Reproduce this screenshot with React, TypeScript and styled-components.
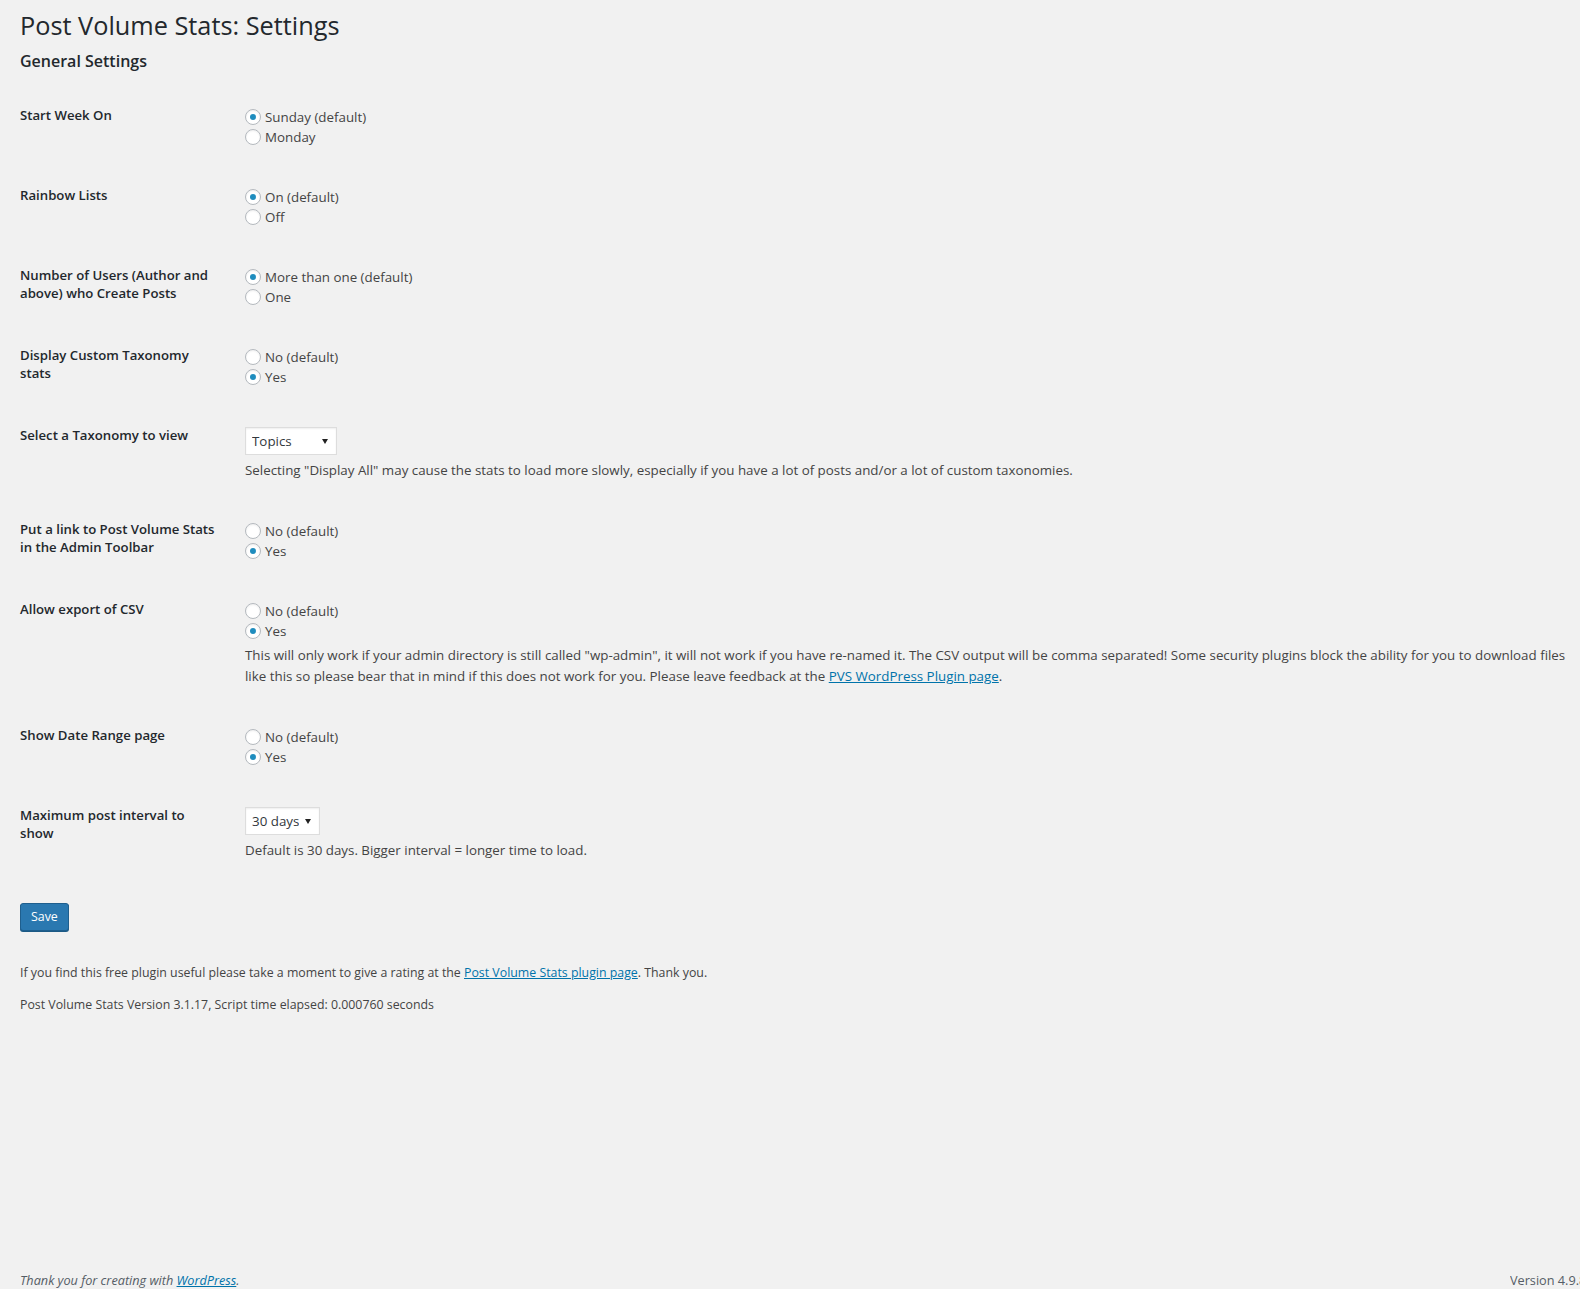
import { useState } from 'react';
import type { ReactNode } from 'react';
import styled, { createGlobalStyle } from 'styled-components';

const GlobalStyle = createGlobalStyle`
  html, body {
    margin: 0;
    padding: 0;
  }
  body {
    background: #f1f1f1;
    color: #444;
    font-family: "Open Sans", "Noto Sans", sans-serif;
    font-size: 13.35px;
    overflow-x: hidden;
  }
`;

const Page = styled.div`
  min-height: 100vh;
  display: flex;
  flex-direction: column;
`;

const Wrap = styled.div`
  padding: 0 0 0 20px;
`;

const Title = styled.h1`
  margin: 0;
  padding: 9px 0 4px;
  font-size: 25.3px;
  font-weight: 400;
  line-height: 32.5px;
  color: #23282d;
`;

const SectionTitle = styled.h2`
  margin: 5px 0 0;
  font-size: 16px;
  font-weight: 600;
  line-height: 21px;
  color: #23282d;
`;

const Table = styled.div`
  margin-top: 14px;
  display: flex;
  flex-direction: column;
`;

const Row = styled.div`
  display: grid;
  grid-template-columns: 200px 1fr;
  column-gap: 25px;
`;

const Th = styled.div`
  padding: 20px 0;
  font-size: 13.2px;
  font-weight: 600;
  line-height: 18.2px;
  color: #23282d;
  white-space: pre-line;
`;

const Td = styled.div`
  padding: 21px 0 19px;
`;

const Option = styled.label`
  display: flex;
  align-items: center;
  height: 20px;
  font-size: 13.35px;
  color: #444;
  cursor: pointer;
`;

const Radio = styled.input.attrs({ type: 'radio' })`
  appearance: none;
  margin: 0 4px 0 0;
  width: 16px;
  height: 16px;
  border: 1px solid #b4b9be;
  border-radius: 50%;
  background: #fff;
  box-shadow: inset 0 1px 2px rgba(0, 0, 0, 0.07);
  display: grid;
  place-items: center;
  cursor: pointer;
  &:checked::before {
    content: '';
    width: 6px;
    height: 6px;
    border-radius: 50%;
    background: #1e8cbe;
  }
`;

const SelectBox = styled.div<{ $width: number }>`
  position: relative;
  width: ${({ $width }) => $width}px;
  height: 28px;
`;

const Select = styled.select`
  appearance: none;
  width: 100%;
  height: 100%;
  margin: 0;
  padding: 0 20px 0 6px;
  border: 1px solid #ddd;
  border-radius: 0;
  background: #fff;
  box-shadow: inset 0 1px 2px rgba(0, 0, 0, 0.07);
  font-family: inherit;
  font-size: 13.35px;
  color: #32373c;
  outline: none;
`;

const Arrow = styled.svg`
  position: absolute;
  right: 9px;
  top: 12px;
  pointer-events: none;
`;

const Description = styled.p<{ $afterSelect?: boolean }>`
  margin: ${({ $afterSelect }) => ($afterSelect ? '5px' : '4px')} 0 0;
  font-size: 13.35px;
  line-height: 21px;
  color: #444;
`;

const Link = styled.a`
  color: #0073aa;
  text-decoration: underline;
`;

const Submit = styled.p`
  margin: 23px 0 0;
`;

const Button = styled.button`
  height: 28px;
  padding: 0 10px 1px;
  border: 1px solid #1f5f8e;
  border-radius: 3px;
  background: #2a78b0;
  box-shadow: 0 1px 0 #1c5a85;
  color: #fff;
  font-family: inherit;
  font-size: 12.4px;
  line-height: 26px;
  cursor: pointer;
`;

const Note = styled.p`
  margin: 32px 0 0;
  font-size: 12.35px;
  line-height: 19.5px;
  color: #444;
  & + & {
    margin-top: 13px;
  }
`;

const Footer = styled.div`
  margin-top: auto;
  display: flex;
  align-items: center;
  padding: 0 0 0 20px;
  height: 18px;
  font-size: 12.7px;
  color: #555d66;
`;

const Credit = styled.span`
  font-style: italic;
`;

const Version = styled.span`
  margin-left: auto;
  width: 70px;
  white-space: nowrap;
  overflow: hidden;
`;

type Setting = {
  label: string;
  options?: string[];
  checked?: number;
  select?: { value: string; choices: string[]; width: number };
  description?: ReactNode;
};

const settings: Setting[] = [
  { label: 'Start Week On', options: ['Sunday (default)', 'Monday'], checked: 0 },
  { label: 'Rainbow Lists', options: ['On (default)', 'Off'], checked: 0 },
  {
    label: 'Number of Users (Author and\nabove) who Create Posts',
    options: ['More than one (default)', 'One'],
    checked: 0,
  },
  { label: 'Display Custom Taxonomy\nstats', options: ['No (default)', 'Yes'], checked: 1 },
  {
    label: 'Select a Taxonomy to view',
    select: { value: 'Topics', choices: ['Topics', 'Display All'], width: 92 },
    description:
      'Selecting "Display All" may cause the stats to load more slowly, especially if you have a lot of posts and/or a lot of custom taxonomies.',
  },
  {
    label: 'Put a link to Post Volume Stats\nin the Admin Toolbar',
    options: ['No (default)', 'Yes'],
    checked: 1,
  },
  {
    label: 'Allow export of CSV',
    options: ['No (default)', 'Yes'],
    checked: 1,
    description: (
      <>
        This will only work if your admin directory is still called "wp-admin", it will not work if
        you have re-named it. The CSV output will be comma separated! Some security plugins block the
        ability for you to download files
        <br />
        like this so please bear that in mind if this does not work for you. Please leave feedback at
        the <Link href='#'>PVS WordPress Plugin page</Link>.
      </>
    ),
  },
  { label: 'Show Date Range page', options: ['No (default)', 'Yes'], checked: 1 },
  {
    label: 'Maximum post interval to\nshow',
    select: { value: '30 days', choices: ['7 days', '30 days', '90 days'], width: 75 },
    description: 'Default is 30 days. Bigger interval = longer time to load.',
  },
];

function SettingRow({ setting, index }: { setting: Setting; index: number }) {
  const [checked, setChecked] = useState(setting.checked ?? 0);
  const [value, setValue] = useState(setting.select?.value ?? '');

  return (
    <Row>
      <Th>{setting.label}</Th>
      <Td>
        {setting.options?.map((option, i) => (
          <Option key={option}>
            <Radio name={`setting-${index}`} checked={checked === i} onChange={() => setChecked(i)} />
            {option}
          </Option>
        ))}
        {setting.select && (
          <SelectBox $width={setting.select.width}>
            <Select value={value} onChange={(e) => setValue(e.target.value)}>
              {setting.select.choices.map((c) => (
                <option key={c}>{c}</option>
              ))}
            </Select>
            <Arrow width='6' height='5' viewBox='0 0 6 5'>
              <path d='M0 0h6L3 5z' fill='#222' />
            </Arrow>
          </SelectBox>
        )}
        {setting.description && (
          <Description $afterSelect={!!setting.select}>{setting.description}</Description>
        )}
      </Td>
    </Row>
  );
}

export default function App() {
  return (
    <Page>
      <GlobalStyle />
      <Wrap>
        <Title>Post Volume Stats: Settings</Title>
        <SectionTitle>General Settings</SectionTitle>
        <Table>
          {settings.map((s, i) => (
            <SettingRow key={s.label} setting={s} index={i} />
          ))}
        </Table>
        <Submit>
          <Button type='button'>Save</Button>
        </Submit>
        <Note>
          If you find this free plugin useful please take a moment to give a rating at the{' '}
          <Link href='#'>Post Volume Stats plugin page</Link>. Thank you.
        </Note>
        <Note>Post Volume Stats Version 3.1.17, Script time elapsed: 0.000760 seconds</Note>
      </Wrap>
      <Footer>
        <Credit>
          Thank you for creating with <Link href='#'>WordPress</Link>.
        </Credit>
        <Version>Version 4.9.8</Version>
      </Footer>
    </Page>
  );
}
